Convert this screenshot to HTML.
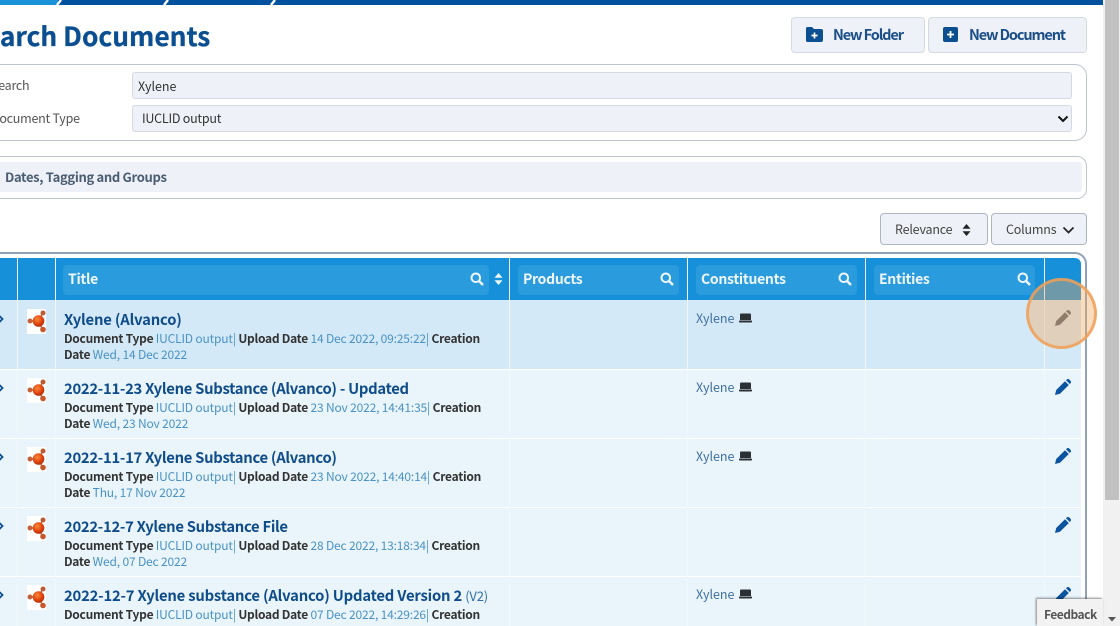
<!DOCTYPE html>
<html><head><meta charset="utf-8">
<style>
html,body{margin:0;padding:0;background:#fff;width:1120px;height:626px;overflow:hidden}
#w{position:relative;width:1120px;height:626px;overflow:hidden;background:#fff;font-family:"Noto Sans CJK JP","Liberation Sans",sans-serif;color:#333}
.a{position:absolute}
.t{position:absolute;white-space:nowrap;font-family:"Noto Sans CJK JP",sans-serif;line-height:18px}
.box{position:absolute;box-sizing:border-box;background:#eef1f7;border:1px solid #d5dae2;border-radius:3px}
.hd{position:absolute;top:265px;height:30px;background:#2a9bdc;border-radius:4px}
.hl{position:absolute;top:270px;font:bold 14px/18px "Noto Sans CJK JP",sans-serif;letter-spacing:-.3px;color:#eef7fd;white-space:nowrap}
.v{position:absolute;width:1px;top:258px;height:368px;background:#f1f8fd}
.row{position:absolute;left:0;width:1081px;height:68px;background:#e9f4fb}
.ti{position:absolute;left:64px;font:bold 14.8px/20px "Noto Sans CJK JP",sans-serif;letter-spacing:-.28px;color:#0f4c8a;white-space:nowrap}
.m{position:absolute;left:64px;font:12px/16px "Noto Sans CJK JP",sans-serif;letter-spacing:-.17px;color:#4a92c4;white-space:nowrap}
.m b{color:#333;font-weight:bold;letter-spacing:-.27px}
.x{position:absolute;left:696px;font:12.5px/18px "Noto Sans CJK JP",sans-serif;color:#41709f}
svg{position:absolute;overflow:visible}
</style></head><body><div id="w">
<!-- top bar -->
<svg style="left:0;top:0" width="1104" height="5"><rect width="1104" height="5" fill="#00529f"/><rect width="58" height="5" fill="#1b93d8"/><path d="M61 0L57 5M168 0L164 5M275 0L271 5" stroke="#fff" stroke-width="2.4"/></svg>
<!-- scrollbar -->
<div class="a" style="left:1103px;top:0;width:17px;height:626px;background:#f1f1f1"></div>
<div class="a" style="left:1105px;top:0;width:14px;height:500px;background:#c1c1c1"></div>
<!-- heading -->
<div class="t" style="left:-31.500px;top:16px;font-weight:bold;font-size:26.300px;color:#0b4f91;line-height:38px;-webkit-text-stroke:.3px #0b4f91">Search Documents</div>
<!-- buttons -->
<div class="box" style="left:791px;top:17px;width:134px;height:36px;border-radius:4px"></div>
<div class="box" style="left:928px;top:17px;width:159px;height:36px;border-radius:4px"></div>
<svg style="left:805px;top:26px" width="18" height="17"><path d="M1 2.500Q1 1 2.500 1H7L9 3H16Q18 3 18 5V14Q18 16 16 16H2.500Q1 16 1 14.500Z" fill="#0b4f91"/><path d="M9.500 6.500V12.500M6.500 9.500H12.500" stroke="#fff" stroke-width="1.700"/></svg>
<svg style="left:942px;top:26px" width="17" height="17"><rect x="1" y="1" width="15" height="15" rx="2" fill="#0b4f91"/><path d="M8.500 5V12M5 8.500H12" stroke="#fff" stroke-width="1.800"/></svg>
<div class="t" style="left:833px;top:26px;font-weight:bold;font-size:14.500px;letter-spacing:-1.100px;color:#1b4f8a">New Folder</div>
<div class="t" style="left:969px;top:26px;font-weight:bold;font-size:14.500px;letter-spacing:-1.100px;color:#1b4f8a">New Document</div>
<!-- search panel -->
<div class="a" style="left:-20px;top:64px;width:1107px;height:77px;box-sizing:border-box;border:1px solid #bfc5cc;border-radius:12px"></div>
<div class="t" style="left:-9px;top:76px;font-size:12.500px;letter-spacing:-.25px;color:#555">Search</div>
<div class="t" style="left:-9px;top:109px;font-size:12.500px;letter-spacing:-.25px;color:#555">Document Type</div>
<div class="box" style="left:132px;top:72px;width:940px;height:27px"></div>
<div class="box" style="left:132px;top:105px;width:940px;height:27px"></div>
<div class="t" style="left:138px;top:77px;font-size:12.500px;color:#333">Xylene</div>
<div class="t" style="left:142px;top:109px;font-size:12.500px;letter-spacing:-.25px;color:#333">IUCLID output</div>
<svg style="left:1057px;top:115px" width="12" height="8"><path d="M1.500 1.500L6 6L10.500 1.500" fill="none" stroke="#111" stroke-width="2"/></svg>
<!-- dates panel -->
<div class="a" style="left:-20px;top:156px;width:1107px;height:43px;box-sizing:border-box;border:1px solid #bfc5cc;border-radius:10px"></div>
<div class="a" style="left:-10px;top:162px;width:1092px;height:30px;background:#eef1f7;border-radius:3px"></div>
<div class="t" style="left:5px;top:168px;font-weight:bold;font-size:13px;letter-spacing:-.33px;color:#4a5d72">Dates, Tagging and Groups</div>
<!-- sort/columns -->
<div class="box" style="left:880px;top:213px;width:108px;height:32px;border-color:#adb7c2;border-radius:4px"></div>
<div class="box" style="left:991px;top:213px;width:96px;height:32px;border-color:#adb7c2;border-radius:4px"></div>
<div class="t" style="left:895px;top:220px;font-size:12.500px;letter-spacing:-.2px;color:#444">Relevance</div>
<div class="t" style="left:1006px;top:220px;font-size:12.500px;letter-spacing:-.2px;color:#444">Columns</div>
<svg style="left:962px;top:224px" width="9" height="12"><path d="M4.500 0L8.500 4.700H.5ZM4.500 12L8.500 7.300H.5Z" fill="#222"/></svg>
<svg style="left:1062px;top:226px" width="13" height="9"><path d="M1.500 1.500L6.500 6.500L11.500 1.500" fill="none" stroke="#222" stroke-width="1.700"/></svg>
<!-- table outer -->
<div class="a" style="left:-20px;top:252px;width:1107px;height:400px;box-sizing:border-box;border:2px solid #8fa3b6;border-radius:12px"></div>
<!-- header bg -->
<div class="a" style="left:0;top:258px;width:1081px;height:42px;background:#1590d9;border-top-right-radius:6px"></div>
<!-- rows -->
<div class="row" style="top:300px;height:69px;background:#d4e9f7"></div>
<div class="row" style="top:370px"></div>
<div class="row" style="top:439px"></div>
<div class="row" style="top:508px"></div>
<div class="row" style="top:577px;height:49px"></div>
<div class="v" style="left:17px"></div><div class="v" style="left:55px"></div><div class="v" style="left:509px"></div><div class="v" style="left:687px"></div><div class="v" style="left:865px"></div><div class="v" style="left:1044px"></div>
<!-- header cells -->
<div class="hd" style="left:63px;width:426px"></div>
<div class="hd" style="left:518px;width:161px"></div>
<div class="hd" style="left:696px;width:161px"></div>
<div class="hd" style="left:874px;width:161px"></div>
<div class="hl" style="left:68px">Title</div>
<div class="hl" style="left:523px">Products</div>
<div class="hl" style="left:701px">Constituents</div>
<div class="hl" style="left:879px">Entities</div>
<svg style="left:470px;top:272px" width="14" height="14"><circle cx="5.800" cy="5.800" r="4.300" fill="none" stroke="#eef7fd" stroke-width="2"/><path d="M9 9L13 13" stroke="#eef7fd" stroke-width="2.400"/></svg>
<svg style="left:660px;top:272px" width="14" height="14"><circle cx="5.800" cy="5.800" r="4.300" fill="none" stroke="#eef7fd" stroke-width="2"/><path d="M9 9L13 13" stroke="#eef7fd" stroke-width="2.400"/></svg>
<svg style="left:838px;top:272px" width="14" height="14"><circle cx="5.800" cy="5.800" r="4.300" fill="none" stroke="#eef7fd" stroke-width="2"/><path d="M9 9L13 13" stroke="#eef7fd" stroke-width="2.400"/></svg>
<svg style="left:1017px;top:272px" width="14" height="14"><circle cx="5.800" cy="5.800" r="4.300" fill="none" stroke="#eef7fd" stroke-width="2"/><path d="M9 9L13 13" stroke="#eef7fd" stroke-width="2.400"/></svg>
<svg style="left:494px;top:273px" width="9" height="12"><path d="M4.500 0L8.500 4.700H.5ZM4.500 12L8.500 7.300H.5Z" fill="#eef7fd"/></svg>
<!-- chevrons -->
<svg style="left:-3px;top:314px" width="8" height="10"><path d="M2 1.500L5.500 5L2 8.500" fill="none" stroke="#0b4f91" stroke-width="1.800"/></svg>
<svg style="left:-3px;top:383px" width="8" height="10"><path d="M2 1.500L5.500 5L2 8.500" fill="none" stroke="#0b4f91" stroke-width="1.800"/></svg>
<svg style="left:-3px;top:452px" width="8" height="10"><path d="M2 1.500L5.500 5L2 8.500" fill="none" stroke="#0b4f91" stroke-width="1.800"/></svg>
<svg style="left:-3px;top:521px" width="8" height="10"><path d="M2 1.500L5.500 5L2 8.500" fill="none" stroke="#0b4f91" stroke-width="1.800"/></svg>
<svg style="left:-3px;top:590px" width="8" height="10"><path d="M2 1.500L5.500 5L2 8.500" fill="none" stroke="#0b4f91" stroke-width="1.800"/></svg>
<!-- molecule icons -->
<svg width="0" height="0"><defs><radialGradient id="g1" cx=".4" cy=".35" r=".7"><stop offset="0" stop-color="#f88a3a"/><stop offset=".6" stop-color="#e2430e"/><stop offset="1" stop-color="#a82c08"/></radialGradient><g id="mol"><rect width="19" height="25" fill="#fff"/><path d="M11 12L16 4M11 12L16 21M11 12L3 12" stroke="#a9704f" stroke-width="1.500"/><circle cx="11.500" cy="12" r="5.800" fill="url(#g1)"/><circle cx="16" cy="4" r="2.500" fill="#bd5a34"/><circle cx="16" cy="20.500" r="2.800" fill="#c9552a"/><circle cx="3" cy="12" r="2.500" fill="#c5603a"/></g></defs></svg>
<svg style="left:27px;top:309px" width="19" height="25"><use href="#mol"/></svg>
<svg style="left:27px;top:378px" width="19" height="25"><use href="#mol"/></svg>
<svg style="left:27px;top:447px" width="19" height="25"><use href="#mol"/></svg>
<svg style="left:27px;top:516px" width="19" height="25"><use href="#mol"/></svg>
<svg style="left:27px;top:585px" width="19" height="25"><use href="#mol"/></svg>
<!-- row text -->
<div class="ti" style="top:310px;letter-spacing:-.17px">Xylene (Alvanco)</div>
<div class="m" style="top:331px"><b>Document Type</b> IUCLID output| <b>Upload Date</b> 14 Dec 2022, 09:25:22| <b>Creation</b><br><b>Date</b> Wed, 14 Dec 2022</div>
<div class="ti" style="top:379px">2022-11-23 Xylene Substance (Alvanco) - Updated</div>
<div class="m" style="top:400px"><b>Document Type</b> IUCLID output| <b>Upload Date</b> 23 Nov 2022, 14:41:35| <b>Creation</b><br><b>Date</b> Wed, 23 Nov 2022</div>
<div class="ti" style="top:448px">2022-11-17 Xylene Substance (Alvanco)</div>
<div class="m" style="top:469px"><b>Document Type</b> IUCLID output| <b>Upload Date</b> 23 Nov 2022, 14:40:14| <b>Creation</b><br><b>Date</b> Thu, 17 Nov 2022</div>
<div class="ti" style="top:517px">2022-12-7 Xylene Substance File</div>
<div class="m" style="top:538px"><b>Document Type</b> IUCLID output| <b>Upload Date</b> 28 Dec 2022, 13:18:34| <b>Creation</b><br><b>Date</b> Wed, 07 Dec 2022</div>
<div class="ti" style="top:586px;letter-spacing:-.19px">2022-12-7 Xylene substance (Alvanco) Updated Version 2 <span style="font-size:13px;font-weight:normal;color:#2f6fa8">(V2)</span></div>
<div class="m" style="top:607px"><b>Document Type</b> IUCLID output| <b>Upload Date</b> 07 Dec 2022, 14:29:26| <b>Creation</b></div>
<!-- constituents -->
<div class="x" style="top:309px">Xylene</div><div class="x" style="top:378px">Xylene</div><div class="x" style="top:447px">Xylene</div><div class="x" style="top:585px">Xylene</div>
<svg width="0" height="0"><defs><g id="lap"><path d="M2 0.500H11Q12 0.500 12 1.500V7H1V1.500Q1 0.500 2 0.500Z" fill="#2b3034"/><rect x="0" y="7.500" width="13" height="2" rx=".7" fill="#2b3034"/></g></defs></svg>
<svg style="left:739px;top:313px" width="13" height="10"><use href="#lap"/></svg>
<svg style="left:739px;top:382px" width="13" height="10"><use href="#lap"/></svg>
<svg style="left:739px;top:451px" width="13" height="10"><use href="#lap"/></svg>
<svg style="left:739px;top:589px" width="13" height="10"><use href="#lap"/></svg>
<!-- pencils -->
<svg width="0" height="0"><defs><path id="pen" d="M0 16L1.200 11L10 2.200L13.800 6L5 14.800ZM11 1.200L12 .3Q13 -.4 14 .3L15.700 2Q16.400 3 15.700 4L14.800 5Z"/></defs></svg>
<svg style="left:1055px;top:310px" width="16" height="16"><use href="#pen" fill="#4f5f72"/></svg>
<svg style="left:1055px;top:379px" width="16" height="16"><use href="#pen" fill="#0b54a0"/></svg>
<svg style="left:1055px;top:448px" width="16" height="16"><use href="#pen" fill="#0b54a0"/></svg>
<svg style="left:1055px;top:517px" width="16" height="16"><use href="#pen" fill="#0b54a0"/></svg>
<svg style="left:1055px;top:587px" width="16" height="16"><use href="#pen" fill="#0b54a0"/></svg>
<!-- highlight -->
<div class="a" style="left:1026px;top:278px;width:71px;height:71px;box-sizing:border-box;border-radius:50%;background:rgba(243,167,94,.4);border:3px solid rgba(240,160,90,.85)"></div>
<!-- feedback -->
<div class="a" style="left:1037px;top:599px;width:66px;height:27px;background:#f2f2f2;box-shadow:-1px -1px 2px rgba(0,0,0,.45)"></div>
<div class="t" style="left:1044px;top:606px;font-weight:bold;font-size:12px;letter-spacing:-.5px;color:#555">Feedback</div>
<svg style="left:1108px;top:617px" width="8" height="5"><path d="M0 0H8L4 4.500Z" fill="#555"/></svg>
</div></body></html>
